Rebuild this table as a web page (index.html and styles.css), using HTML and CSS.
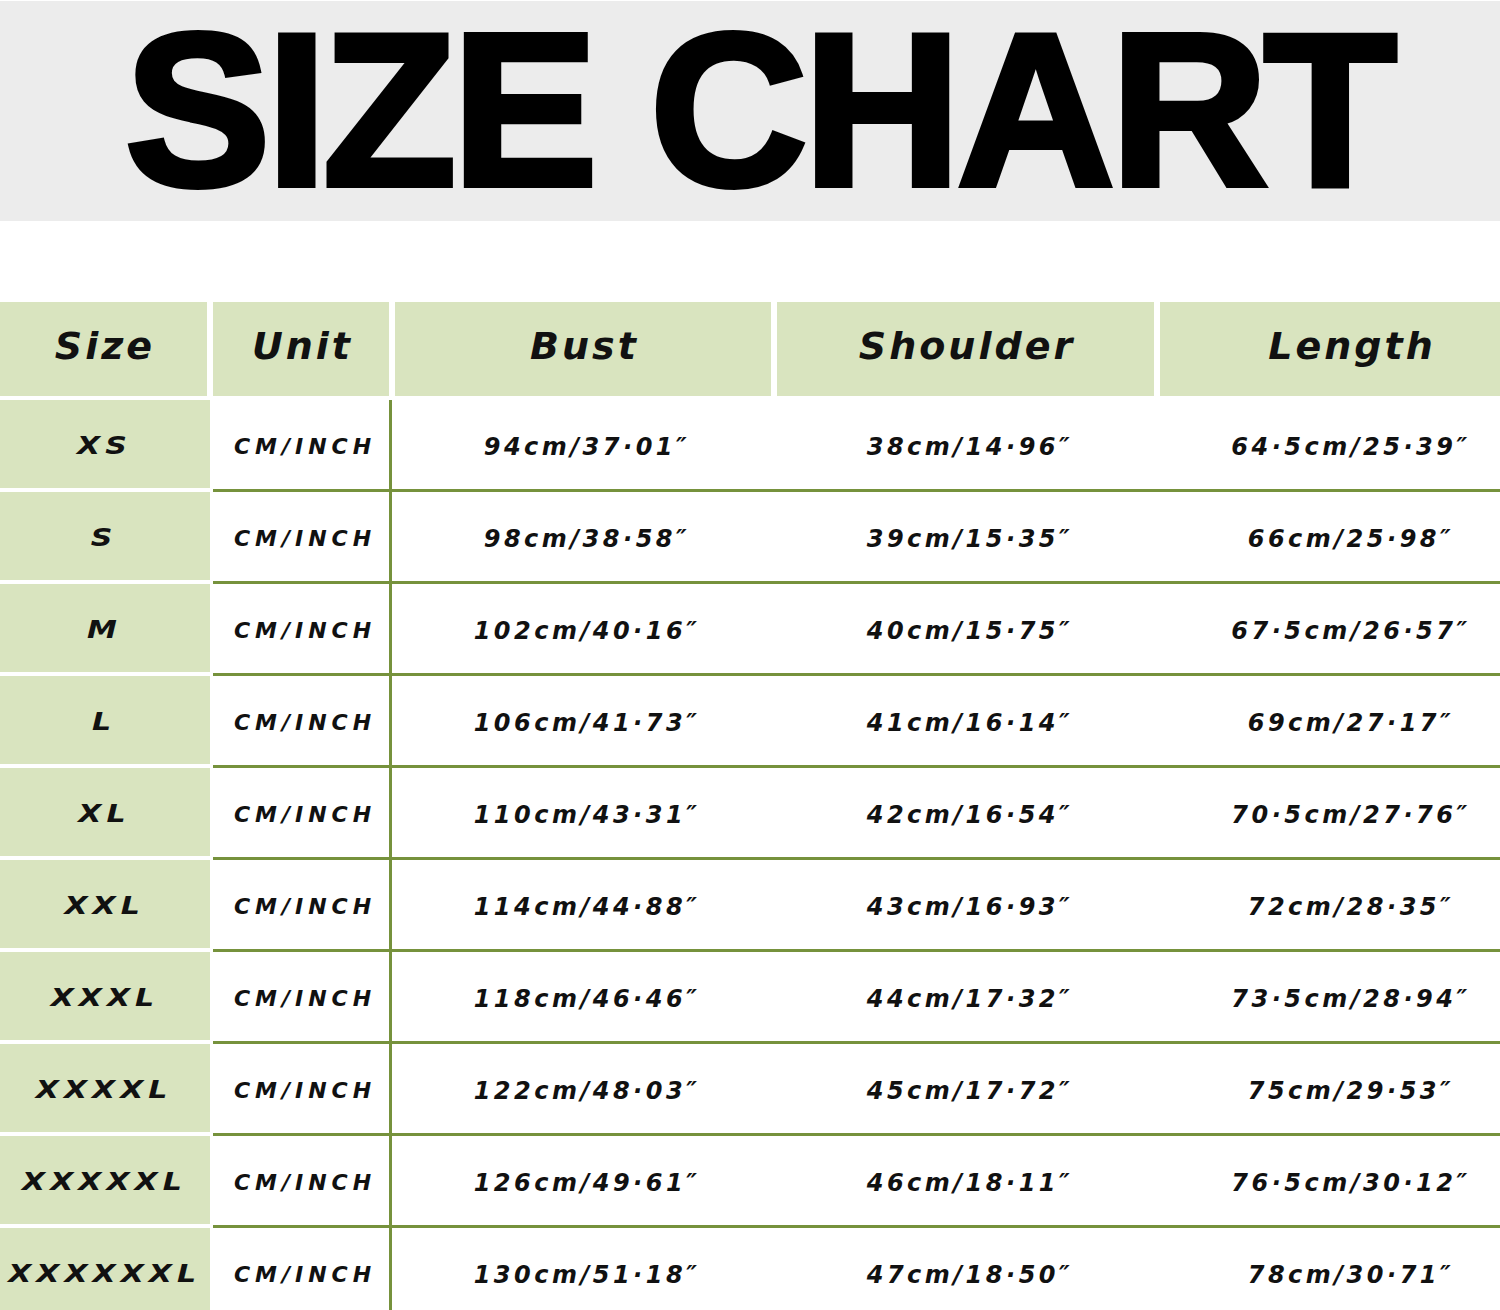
FILE: index.html
```html
<!DOCTYPE html>
<html>
<head>
<meta charset="utf-8">
<link rel="stylesheet" href="styles.css">
</head>
<body>
<div class="band"><h1 class="title">SIZE CHART</h1></div>
<div class="chart">
  <div class="head">
    <div class="hc">Size</div>
    <div class="hc">Unit</div>
    <div class="hc">Bust</div>
    <div class="hc">Shoulder</div>
    <div class="hc hc-len">Length</div>
  </div>
  <div class="row"><div class="size"><span class="sz">XS</span></div><div class="cells"><div class="unit">CM/INCH</div><div class="val bust">94cm/37·01″</div><div class="val">38cm/14·96″</div><div class="val len">64·5cm/25·39″</div></div></div>
  <div class="row"><div class="size"><span class="sz">S</span></div><div class="cells"><div class="unit">CM/INCH</div><div class="val bust">98cm/38·58″</div><div class="val">39cm/15·35″</div><div class="val len">66cm/25·98″</div></div></div>
  <div class="row"><div class="size"><span class="sz">M</span></div><div class="cells"><div class="unit">CM/INCH</div><div class="val bust">102cm/40·16″</div><div class="val">40cm/15·75″</div><div class="val len">67·5cm/26·57″</div></div></div>
  <div class="row"><div class="size"><span class="sz">L</span></div><div class="cells"><div class="unit">CM/INCH</div><div class="val bust">106cm/41·73″</div><div class="val">41cm/16·14″</div><div class="val len">69cm/27·17″</div></div></div>
  <div class="row"><div class="size"><span class="sz">XL</span></div><div class="cells"><div class="unit">CM/INCH</div><div class="val bust">110cm/43·31″</div><div class="val">42cm/16·54″</div><div class="val len">70·5cm/27·76″</div></div></div>
  <div class="row"><div class="size"><span class="sz">XXL</span></div><div class="cells"><div class="unit">CM/INCH</div><div class="val bust">114cm/44·88″</div><div class="val">43cm/16·93″</div><div class="val len">72cm/28·35″</div></div></div>
  <div class="row"><div class="size"><span class="sz">XXXL</span></div><div class="cells"><div class="unit">CM/INCH</div><div class="val bust">118cm/46·46″</div><div class="val">44cm/17·32″</div><div class="val len">73·5cm/28·94″</div></div></div>
  <div class="row"><div class="size"><span class="sz">XXXXL</span></div><div class="cells"><div class="unit">CM/INCH</div><div class="val bust">122cm/48·03″</div><div class="val">45cm/17·72″</div><div class="val len">75cm/29·53″</div></div></div>
  <div class="row"><div class="size"><span class="sz">XXXXXL</span></div><div class="cells"><div class="unit">CM/INCH</div><div class="val bust">126cm/49·61″</div><div class="val">46cm/18·11″</div><div class="val len">76·5cm/30·12″</div></div></div>
  <div class="row"><div class="size"><span class="sz">XXXXXXL</span></div><div class="cells"><div class="unit">CM/INCH</div><div class="val bust">130cm/51·18″</div><div class="val">47cm/18·50″</div><div class="val len">78cm/30·71″</div></div></div>
</div>
</body>
</html>
```
FILE: styles.css
```css
html, body {
  margin: 0;
  padding: 0;
  background: #ffffff;
}
body {
  width: 1500px;
  overflow: hidden;
  font-family: "DejaVu Sans", sans-serif;
  color: #111111;
}
.band {
  margin-top: 1px;
  height: 220px;
  background: #ececec;
}
.title {
  margin: 0;
  padding: 0 0 0 18px;
  text-align: center;
  font-family: "Liberation Sans", Arial, sans-serif;
  font-weight: 700;
  font-size: 218px;
  line-height: 218px;
  letter-spacing: -4px;
  color: #000000;
  -webkit-text-stroke: 6px #000000;
}
.chart {
  margin-top: 81px;
}
.head {
  display: grid;
  grid-template-columns: 207px 176px 376px 377px 1fr;
  column-gap: 6px;
  height: 94px;
  margin-bottom: 4px;
}
.hc {
  background: #d9e4bf;
  display: flex;
  align-items: center;
  justify-content: center;
  padding-bottom: 6px;
  padding-left: 3px;
  font-size: 38px;
  font-weight: 700;
  font-style: italic;
  letter-spacing: 3px;
  color: #111111;
}
.hc-len {
  padding-left: 44px;
}
.row {
  display: flex;
  height: 92px;
}
.size {
  width: 210px;
  height: 88px;
  flex: none;
  background: #d9e4bf;
  display: flex;
  align-items: center;
  justify-content: center;
  padding-top: 3px;
  padding-right: 6px;
  box-sizing: border-box;
  font-size: 24px;
  font-weight: 700;
  font-style: italic;
  letter-spacing: 4px;
}
.sz {
  display: inline-block;
  transform: scaleX(1.25);
  padding-left: 4px;
}
.cells {
  margin-left: 3px;
  flex: 1;
  display: grid;
  grid-template-columns: 176px 389px 380px 1fr;
  border-bottom: 3px solid #76923c;
  height: 89px;
}
.unit, .val {
  display: flex;
  align-items: center;
  justify-content: center;
  padding-top: 4px;
  font-weight: 700;
  font-style: italic;
  font-size: 24px;
}
.unit {
  font-size: 22px;
  letter-spacing: 5px;
  padding-left: 8px;
}
.val {
  letter-spacing: 3.5px;
  padding-left: 4px;
}
.bust {
  border-left: 3px solid #76923c;
}
.len {
  padding-left: 44px;
}
```
